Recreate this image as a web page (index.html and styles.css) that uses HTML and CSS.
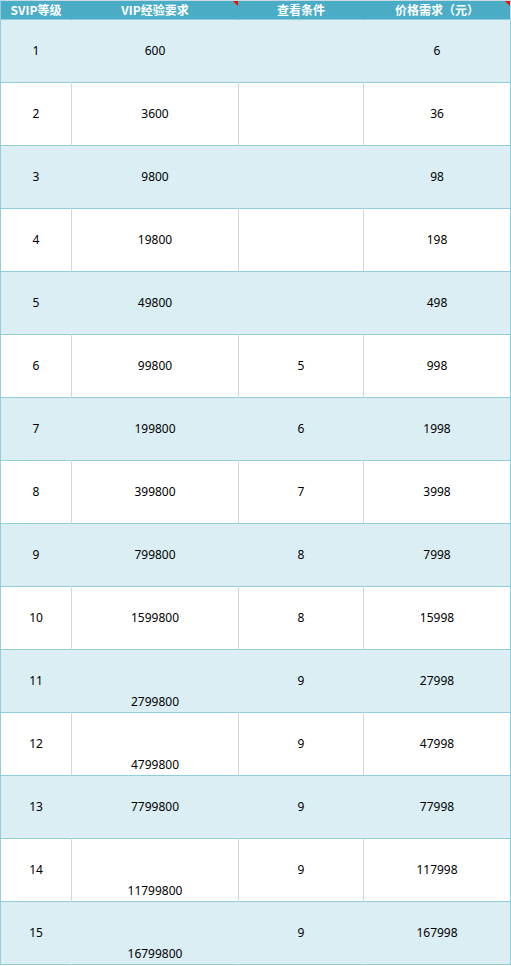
FILE: index.html
```html
<!DOCTYPE html>
<html lang="zh-CN">
<head>
<meta charset="utf-8">
<title>SVIP等级</title>
<link rel="stylesheet" href="styles.css">
</head>
<body>
<table class="sheet">
  <colgroup>
    <col class="c1"><col class="c2"><col class="c3"><col class="c4">
  </colgroup>
  <thead>
    <tr>
      <th>SVIP等级</th>
      <th class="note">VIP经验要求<span class="marker"></span></th>
      <th>查看条件</th>
      <th class="note">价格需求（元）<span class="marker"></span></th>
    </tr>
  </thead>
  <tbody>
    <tr class="shaded"><td>1</td><td>600</td><td></td><td>6</td></tr>
    <tr><td>2</td><td>3600</td><td></td><td>36</td></tr>
    <tr class="shaded"><td>3</td><td>9800</td><td></td><td>98</td></tr>
    <tr><td>4</td><td>19800</td><td></td><td>198</td></tr>
    <tr class="shaded"><td>5</td><td>49800</td><td></td><td>498</td></tr>
    <tr><td>6</td><td>99800</td><td>5</td><td>998</td></tr>
    <tr class="shaded"><td>7</td><td>199800</td><td>6</td><td>1998</td></tr>
    <tr><td>8</td><td>399800</td><td>7</td><td>3998</td></tr>
    <tr class="shaded"><td>9</td><td>799800</td><td>8</td><td>7998</td></tr>
    <tr><td>10</td><td>1599800</td><td>8</td><td>15998</td></tr>
    <tr class="shaded"><td>11</td><td class="bottom">2799800</td><td>9</td><td>27998</td></tr>
    <tr><td>12</td><td class="bottom">4799800</td><td>9</td><td>47998</td></tr>
    <tr class="shaded"><td>13</td><td>7799800</td><td>9</td><td>77998</td></tr>
    <tr><td>14</td><td class="bottom">11799800</td><td>9</td><td>117998</td></tr>
    <tr class="shaded"><td>15</td><td class="bottom">16799800</td><td>9</td><td>167998</td></tr>
  </tbody>
</table>
</body>
</html>
```

FILE: styles.css
```css
html, body {
  margin: 0;
  padding: 0;
  background: #ffffff;
}

.sheet {
  border-collapse: separate;
  border-spacing: 0;
  table-layout: fixed;
  width: 511px;
  border-left: 1px solid #92cddc;
  border-top: 1px solid #c9dbe2;
  font-family: "Noto Sans", "Noto Sans CJK SC", sans-serif;
  font-size: 12px;
  color: #000000;
}

.c1 { width: 71px; }
.c2 { width: 167px; }
.c3 { width: 125px; }
.c4 { width: 147px; }

.sheet th {
  background: #4bacc6;
  color: #ffffff;
  font-family: "Noto Sans CJK SC", "Noto Sans", sans-serif;
  font-weight: bold;
  font-size: 12px;
  height: 18px;
  line-height: 18px;
  padding: 0;
  text-align: center;
  vertical-align: middle;
  border-right: 1px solid #4bacc6;
  border-bottom: 1px solid #92cddc;
  white-space: nowrap;
}

.sheet th:last-child {
  border-right-color: #b7dee8;
}

.sheet th.note {
  position: relative;
}

.marker {
  position: absolute;
  top: 0;
  right: 0;
  width: 0;
  height: 0;
  border-top: 5px solid #ff0000;
  border-left: 5px solid transparent;
}

.sheet td {
  height: 62px;
  padding: 0;
  text-align: center;
  vertical-align: middle;
  line-height: 16px;
  border-right: 1px solid #d0d7e5;
  border-bottom: 1px solid #92cddc;
}

.sheet td:last-child {
  border-right-color: #92cddc;
}

.sheet tr.shaded td {
  background: #daeef3;
  border-right-color: #daeef3;
}

.sheet tr.shaded td:last-child {
  border-right-color: #92cddc;
}

.sheet td.bottom {
  vertical-align: bottom;
  height: 60px;
  padding-bottom: 2px;
  line-height: 16px;
}
```
